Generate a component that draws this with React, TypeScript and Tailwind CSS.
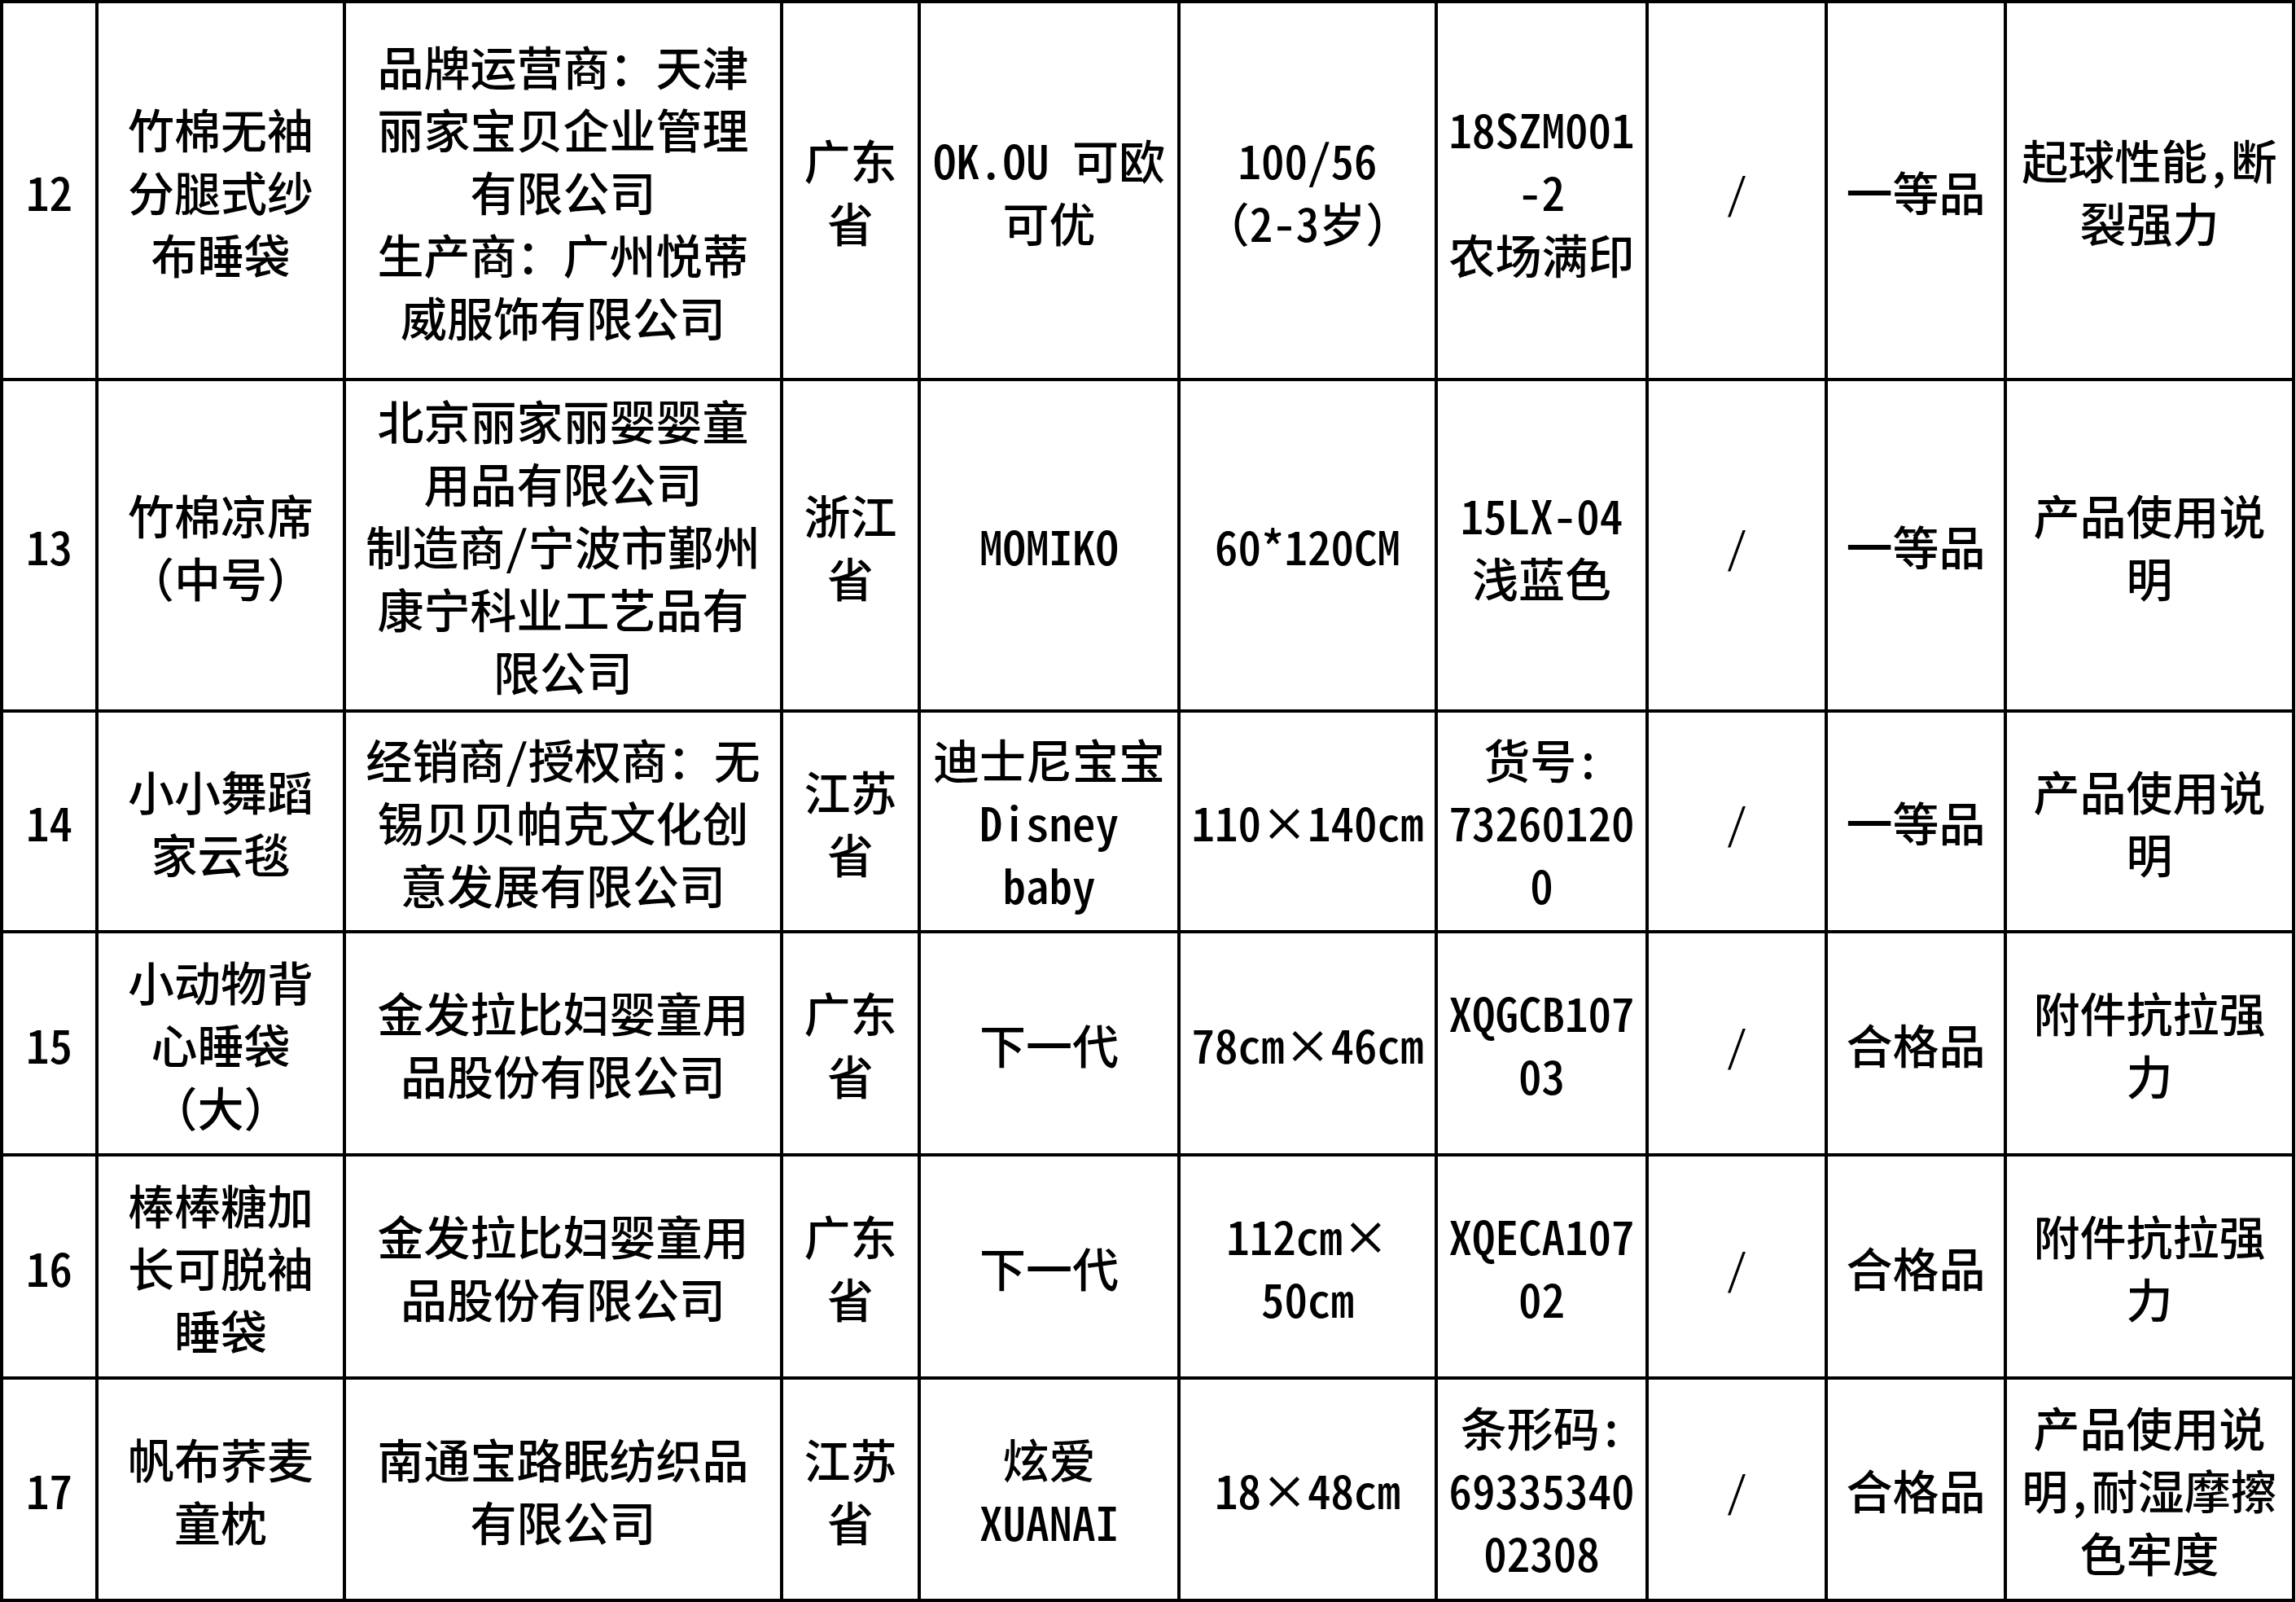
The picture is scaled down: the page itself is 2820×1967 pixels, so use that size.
const rows: string[][][] = [
  [
    ['12'],
    ['竹棉无袖', '分腿式纱', '布睡袋'],
    ['品牌运营商：天津', '丽家宝贝企业管理', '有限公司', '生产商：广州悦蒂', '威服饰有限公司'],
    ['广东', '省'],
    ['OK.OU 可欧', '可优'],
    ['100/56', '（2-3岁）'],
    ['18SZM001', '-2', '农场满印'],
    ['/'],
    ['一等品'],
    ['起球性能,断', '裂强力'],
  ],
  [
    ['13'],
    ['竹棉凉席', '（中号）'],
    ['北京丽家丽婴婴童', '用品有限公司', '制造商/宁波市鄞州', '康宁科业工艺品有', '限公司'],
    ['浙江', '省'],
    ['MOMIKO'],
    ['60*120CM'],
    ['15LX-04', '浅蓝色'],
    ['/'],
    ['一等品'],
    ['产品使用说', '明'],
  ],
  [
    ['14'],
    ['小小舞蹈', '家云毯'],
    ['经销商/授权商：无', '锡贝贝帕克文化创', '意发展有限公司'],
    ['江苏', '省'],
    ['迪士尼宝宝', 'Disney', 'baby'],
    ['110×140cm'],
    ['货号:', '73260120', '0'],
    ['/'],
    ['一等品'],
    ['产品使用说', '明'],
  ],
  [
    ['15'],
    ['小动物背', '心睡袋', '（大）'],
    ['金发拉比妇婴童用', '品股份有限公司'],
    ['广东', '省'],
    ['下一代'],
    ['78cm×46cm'],
    ['XQGCB107', '03'],
    ['/'],
    ['合格品'],
    ['附件抗拉强', '力'],
  ],
  [
    ['16'],
    ['棒棒糖加', '长可脱袖', '睡袋'],
    ['金发拉比妇婴童用', '品股份有限公司'],
    ['广东', '省'],
    ['下一代'],
    ['112cm×', '50cm'],
    ['XQECA107', '02'],
    ['/'],
    ['合格品'],
    ['附件抗拉强', '力'],
  ],
  [
    ['17'],
    ['帆布荞麦', '童枕'],
    ['南通宝路眠纺织品', '有限公司'],
    ['江苏', '省'],
    ['炫爱', 'XUANAI'],
    ['18×48cm'],
    ['条形码:', '69335340', '02308'],
    ['/'],
    ['合格品'],
    ['产品使用说', '明,耐湿摩擦', '色牢度'],
  ],
];

// half-width latin only on ASCII runs, CJK punctuation stays full width
function Line({ text }: { text: string }) {
  const runs = text.match(/[\x20-\x7e]+|[^\x20-\x7e]+/g) ?? [];
  return (
    <div className="whitespace-nowrap text-[57px] leading-[77px] font-medium [text-spacing-trim:space-all]">
      {runs.map((run, i) =>
        /^[\x20-\x7e]/.test(run) ? (
          <span key={i} className="[font-feature-settings:'hwid']">
            {run}
          </span>
        ) : (
          <span key={i}>{run}</span>
        )
      )}
    </div>
  );
}

export default function App() {
  return (
    <div className="bg-white min-h-screen font-['Noto_Sans_CJK_SC','Noto_Sans',sans-serif] text-black">
      <div className="grid w-fit bg-black p-[4px] gap-[4px] grid-cols-[113px_300px_533px_165px_315px_312px_255px_216px_216px_350px] grid-rows-[460px_403px_267px_270px_270px_269px]">
        {rows.map((row, r) =>
          row.map((lines, c) => (
            <div key={`${r}-${c}`} className="bg-white flex flex-col items-center justify-center text-center">
              {c === 7 ? (
                <div className="text-[52px] leading-[77px] font-normal [font-feature-settings:'hwid']">{lines[0]}</div>
              ) : (
                lines.map((line, i) => <Line key={i} text={line} />)
              )}
            </div>
          ))
        )}
      </div>
    </div>
  );
}
